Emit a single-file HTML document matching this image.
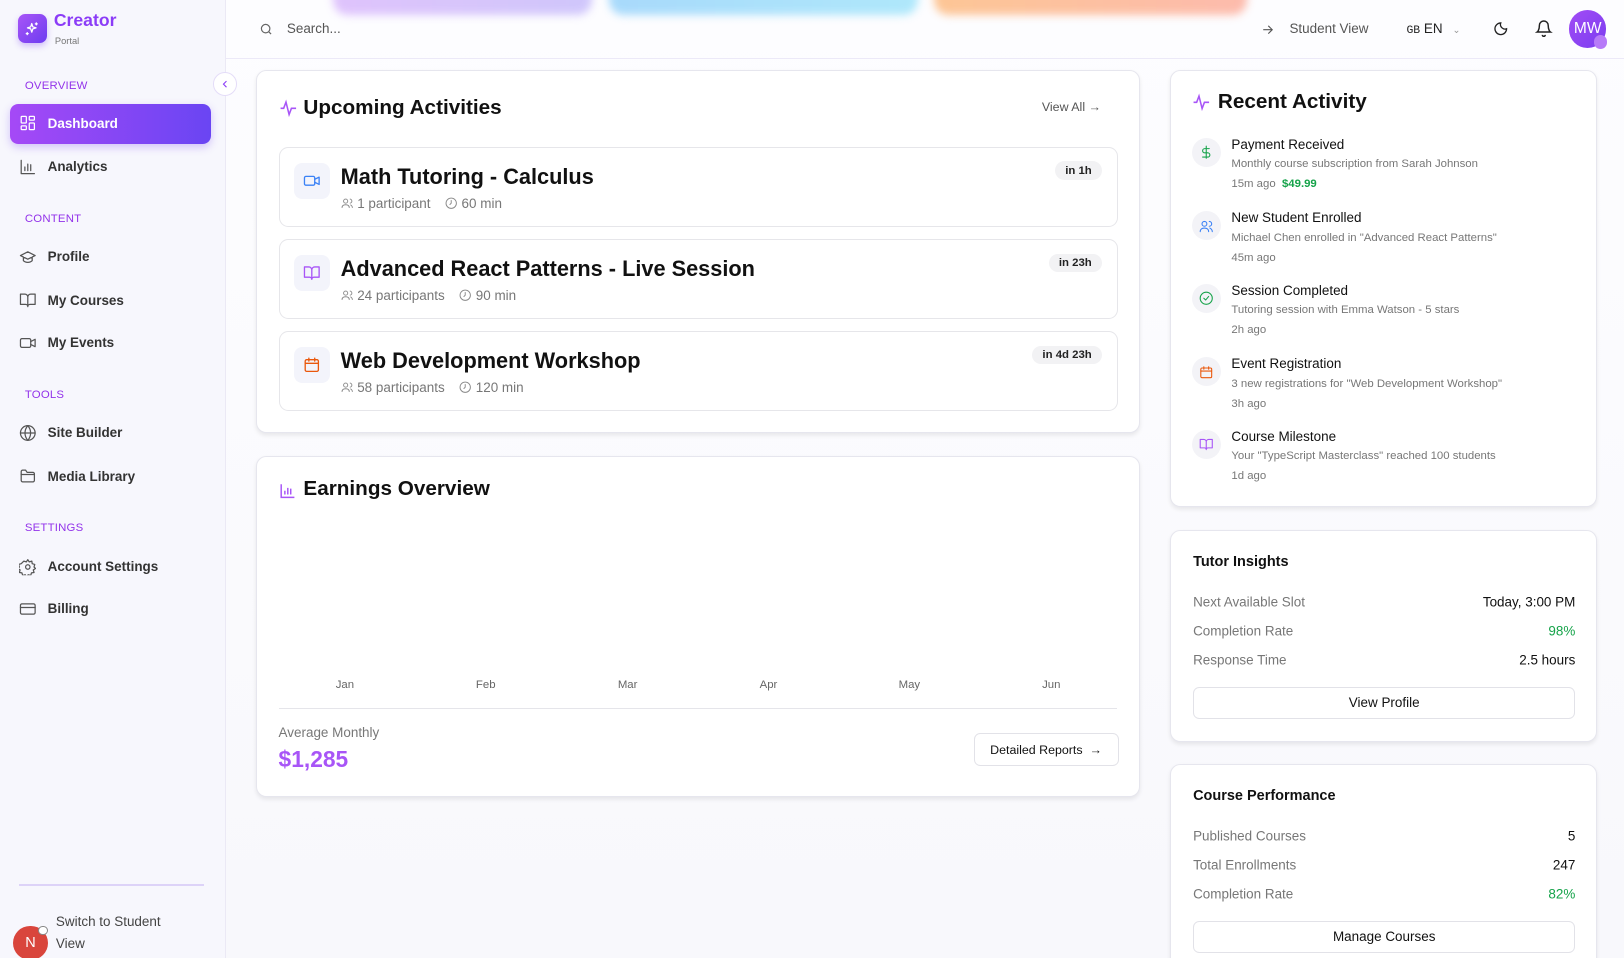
<!DOCTYPE html>
<html><head><meta charset="utf-8"><style>
*{box-sizing:border-box;margin:0;padding:0}
html,body{width:1624px;height:958px;overflow:hidden;background:#fbfbfe}
body{font-family:"Liberation Sans",Arial,sans-serif;color:#111}
#root{zoom:1.0357;position:relative;width:1568px;height:925px;background:linear-gradient(180deg,#fdfdff,#f8f8fc)}
.abs{position:absolute}
.side{left:0;top:0;width:218px;height:925px;background:#f7f7fd;border-right:1px solid #ebe9f5}
.sec{position:absolute;left:24px;font-size:11px;color:#9333ea;letter-spacing:.2px;transform:translateY(-50%)}
.nav{position:absolute;left:18px;font-size:13px;color:#333;font-weight:bold;display:flex;align-items:center;gap:11px;transform:translateY(-50%)}
.nav svg{width:17px;height:17px;fill:none;stroke:#555;stroke-width:1.7;stroke-linecap:round;stroke-linejoin:round}
.card{position:absolute;background:#fff;border:1px solid #e6e6ee;border-radius:10px;box-shadow:0 2px 4px rgba(0,0,0,.08)}
.item{position:absolute;left:21px;right:21px;height:77px;border:1px solid #e6e6ea;border-radius:9px}
.ib{position:absolute;left:14px;top:14px;width:35px;height:35px;border-radius:8px;background:#f3f4fb;display:flex;align-items:center;justify-content:center}
.ib svg{width:17px;height:17px;fill:none;stroke-width:1.8;stroke-linecap:round;stroke-linejoin:round}
.it{position:absolute;left:59px;top:15px;font-size:21px;font-weight:bold;color:#111}
.im{position:absolute;left:59px;top:46px;font-size:13px;color:#777;display:flex;gap:14px}
.im span{display:flex;align-items:center;gap:4px}
.im svg{width:12px;height:12px;fill:none;stroke:#888;stroke-width:1.8}
.badge{position:absolute;right:14px;top:13px;background:#f2f2f4;border-radius:10px;font-size:11px;font-weight:bold;padding:3px 10px;color:#222}
.ra{position:absolute;left:20px;right:20px}
.ra .ic{position:absolute;left:0;top:-6px;width:28px;height:28px;border-radius:50%;background:#f3f3f7;display:flex;align-items:center;justify-content:center}
.ra .ic svg{width:14px;height:14px;fill:none;stroke-width:1.8;stroke-linecap:round;stroke-linejoin:round}
.ra .t{position:absolute;left:38px;top:-7px;font-size:13px;color:#111;font-weight:500}
.ra .d{position:absolute;left:38px;top:14px;font-size:11px;color:#777;white-space:nowrap}
.ra .tm{position:absolute;left:38px;top:33px;font-size:11px;color:#777}
.row{position:absolute;left:21px;right:20px;font-size:13px;display:flex;justify-content:space-between;transform:translateY(-50%)}
.row .l{color:#777}.row .r{color:#111}
.btn{position:absolute;left:21px;right:20px;height:31px;border:1px solid #e2e2e8;border-radius:6px;font-size:13px;font-weight:500;display:flex;align-items:center;justify-content:center;color:#111}
.mo{position:absolute;top:656px;font-size:11px;color:#666;transform:translateX(-50%)}
.ct{position:absolute;left:45px;font-size:20px;font-weight:bold}
</style></head><body><div id="root">

<div class="abs" style="left:322px;top:-20px;width:250px;height:34px;border-radius:14px;background:linear-gradient(90deg,#dcbdfc,#cbc1fb);filter:blur(4px);opacity:.9"></div>
<div class="abs" style="left:588px;top:-20px;width:298px;height:34px;border-radius:14px;background:linear-gradient(90deg,#9fd6fb,#a7e6fb);filter:blur(4px);opacity:.9"></div>
<div class="abs" style="left:902px;top:-20px;width:302px;height:34px;border-radius:14px;background:linear-gradient(90deg,#fdc08a,#fdb4a4);filter:blur(4px);opacity:.9"></div>
<div class="abs" style="left:218px;top:56px;width:1350px;height:1px;background:#ece9f8"></div>

<div class="abs side">
 <div class="abs" style="left:17px;top:14px;width:28px;height:28px;border-radius:7px;background:linear-gradient(135deg,#a855f7,#6d3cf0);box-shadow:0 3px 6px rgba(120,60,240,.3);display:flex;align-items:center;justify-content:center">
  <svg width="15" height="15" viewBox="0 0 24 24" fill="none" stroke="#fff" stroke-width="2" stroke-linecap="round" stroke-linejoin="round"><path d="M12 4l1.6 5 5 1.6-5 1.6-1.6 5-1.6-5-5-1.6 5-1.6z"/><path d="M19 3v3M17.5 4.5h3M5 18v3M3.5 19.5h3"/></svg></div>
 <div class="abs" style="left:52px;top:10px;font-size:17px;font-weight:bold;color:#8b3cf7">Creator</div>
 <div class="abs" style="left:53px;top:35px;font-size:9px;color:#777">Portal</div>
 <div class="sec" style="top:83px">OVERVIEW</div>
 <div class="abs" style="left:10px;top:100px;width:194px;height:39px;border-radius:8px;background:linear-gradient(90deg,#a549f6,#6a45f3);box-shadow:0 3px 8px rgba(120,70,240,.3)"></div>
 <div class="nav" style="top:119px;color:#fff"><svg viewBox="0 0 24 24" style="stroke:#fff"><rect x="3" y="3" width="7" height="9" rx="1"/><rect x="14" y="3" width="7" height="5" rx="1"/><rect x="14" y="12" width="7" height="9" rx="1"/><rect x="3" y="16" width="7" height="5" rx="1"/></svg>Dashboard</div>
 <div class="nav" style="top:161px"><svg viewBox="0 0 24 24"><path d="M3 3v18h18M8 17v-5M12 17V8M16 17v-8"/></svg>Analytics</div>
 <div class="sec" style="top:211px">CONTENT</div>
 <div class="nav" style="top:248px"><svg viewBox="0 0 24 24"><path d="M22 10L12 5 2 10l10 5 10-5zM6 12v5c3 3 9 3 12 0v-5"/></svg>Profile</div>
 <div class="nav" style="top:290px"><svg viewBox="0 0 24 24"><path d="M2 4h6a4 4 0 014 4v13a3 3 0 00-3-3H2zM22 4h-6a4 4 0 00-4 4v13a3 3 0 013-3h7z"/></svg>My Courses</div>
 <div class="nav" style="top:331px"><svg viewBox="0 0 24 24"><rect x="2" y="6" width="14" height="12" rx="2"/><path d="M16 10l6-3v10l-6-3"/></svg>My Events</div>
 <div class="sec" style="top:381px">TOOLS</div>
 <div class="nav" style="top:418px"><svg viewBox="0 0 24 24"><circle cx="12" cy="12" r="10"/><path d="M2 12h20M12 2a15 15 0 010 20M12 2a15 15 0 000 20"/></svg>Site Builder</div>
 <div class="nav" style="top:460px"><svg viewBox="0 0 24 24"><path d="M3 6a2 2 0 012-2h4l2 3h8a2 2 0 012 2v9a2 2 0 01-2 2H5a2 2 0 01-2-2z"/><path d="M3 10h18"/></svg>Media Library</div>
 <div class="sec" style="top:510px">SETTINGS</div>
 <div class="nav" style="top:547px"><svg viewBox="0 0 24 24"><circle cx="12" cy="12" r="3"/><path d="M12 2l2 3 3.5-1 .5 3.5 3.5 1-1 3.5 2 2-3 2 1 3.5-3.5.5-1 3.5-3.5-1-2 3-2-3-3.5 1-1-3.5-3.5-.5 1-3.5-3-2 2-2-1-3.5 3.5-1L6.5 4 10 5z"/></svg>Account Settings</div>
 <div class="nav" style="top:588px"><svg viewBox="0 0 24 24"><rect x="2" y="5" width="20" height="14" rx="2"/><path d="M2 10h20"/></svg>Billing</div>
 <div class="abs" style="left:18px;top:854px;width:179px;height:1px;background:#ddd3f8"></div>
 <div class="abs" style="left:54px;top:880px;font-size:13px;color:#444;line-height:21px">Switch to Student<br>View</div>
 <div class="abs" style="left:13px;top:894px;width:33px;height:33px;border-radius:50%;background:#d9453c;color:#fff;font-size:14px;display:flex;align-items:center;justify-content:center">N</div>
 <div class="abs" style="left:37px;top:894px;width:9px;height:9px;border-radius:50%;background:#fff;border:1px solid #888"></div>
</div>
<div class="abs" style="left:206px;top:70px;width:23px;height:23px;border-radius:50%;background:#fff;border:1px solid #e4dcf8;display:flex;align-items:center;justify-content:center"><svg width="10" height="10" viewBox="0 0 24 24" fill="none" stroke="#8b3cf7" stroke-width="2.5"><path d="M15 5l-7 7 7 7"/></svg></div>

<svg class="abs" style="left:250px;top:21px" width="14" height="14" viewBox="0 0 24 24" fill="none" stroke="#666" stroke-width="2"><circle cx="11" cy="11" r="7"/><path d="M20 20l-4-4"/></svg>
<div class="abs" style="left:277px;top:20px;font-size:13px;color:#555">Search...</div>
<svg class="abs" style="left:1218px;top:22px" width="13" height="13" viewBox="0 0 24 24" fill="none" stroke="#555" stroke-width="2"><path d="M4 12h16M13 5l7 7-7 7"/></svg>
<div class="abs" style="left:1245px;top:20px;font-size:13px;color:#555">Student View</div>
<div class="abs" style="left:1358px;top:20px;font-size:13px;color:#222"><span style="font-size:11px;font-family:'Liberation Mono',monospace">GB</span> EN <span style="color:#999;font-size:9px;margin-left:6px">&#8964;</span></div>
<svg class="abs" style="left:1442px;top:20px" width="15" height="15" viewBox="0 0 24 24" fill="none" stroke="#222" stroke-width="2"><path d="M12 3a7 7 0 009 9 9 9 0 11-9-9z"/></svg>
<svg class="abs" style="left:1482px;top:18px" width="17" height="18" viewBox="0 0 24 24" fill="none" stroke="#222" stroke-width="2"><path d="M6 8a6 6 0 0112 0c0 7 3 9 3 9H3s3-2 3-9M10 21a2 2 0 004 0"/></svg>
<div class="abs" style="left:1515px;top:10px;width:36px;height:36px;border-radius:50%;background:linear-gradient(135deg,#a24cf5,#7b3df0);color:#fff;font-size:15px;display:flex;align-items:center;justify-content:center">MW</div>
<div class="abs" style="left:1539px;top:34px;width:13px;height:13px;border-radius:50%;background:#b77af8"></div>

<div class="card" style="left:247px;top:68px;width:854px;height:350px">
 <svg class="abs" style="left:21px;top:27px" width="18" height="18" viewBox="0 0 24 24" fill="none" stroke="#a855f7" stroke-width="2"><path d="M2 12h4l3-8 4 16 3-8h6"/></svg>
 <div class="ct" style="top:24px">Upcoming Activities</div>
 <div class="abs" style="left:758px;top:28px;font-size:12px;color:#555">View All &#8594;</div>
 <div class="item" style="top:73px"><div class="ib"><svg viewBox="0 0 24 24" stroke="#3b82f6"><rect x="2" y="6" width="14" height="12" rx="2"/><path d="M16 10l6-3v10l-6-3"/></svg></div><div class="it">Math Tutoring - Calculus</div><div class="im"><span><svg viewBox="0 0 24 24"><circle cx="9" cy="8" r="4"/><path d="M2 21c0-4 3-6 7-6s7 2 7 6M17 4a4 4 0 010 8M22 21c0-3-2-5-4-6"/></svg>1 participant</span><span><svg viewBox="0 0 24 24"><circle cx="12" cy="12" r="10"/><path d="M12 6v6l-3 3"/></svg>60 min</span></div><div class="badge">in 1h</div></div>
 <div class="item" style="top:162px"><div class="ib"><svg viewBox="0 0 24 24" stroke="#a855f7"><path d="M2 4h6a4 4 0 014 4v13a3 3 0 00-3-3H2zM22 4h-6a4 4 0 00-4 4v13a3 3 0 013-3h7z"/></svg></div><div class="it">Advanced React Patterns - Live Session</div><div class="im"><span><svg viewBox="0 0 24 24"><circle cx="9" cy="8" r="4"/><path d="M2 21c0-4 3-6 7-6s7 2 7 6M17 4a4 4 0 010 8M22 21c0-3-2-5-4-6"/></svg>24 participants</span><span><svg viewBox="0 0 24 24"><circle cx="12" cy="12" r="10"/><path d="M12 6v6l-3 3"/></svg>90 min</span></div><div class="badge">in 23h</div></div>
 <div class="item" style="top:251px"><div class="ib"><svg viewBox="0 0 24 24" stroke="#ea580c"><rect x="3" y="5" width="18" height="16" rx="2"/><path d="M3 10h18M8 3v4M16 3v4"/></svg></div><div class="it">Web Development Workshop</div><div class="im"><span><svg viewBox="0 0 24 24"><circle cx="9" cy="8" r="4"/><path d="M2 21c0-4 3-6 7-6s7 2 7 6M17 4a4 4 0 010 8M22 21c0-3-2-5-4-6"/></svg>58 participants</span><span><svg viewBox="0 0 24 24"><circle cx="12" cy="12" r="10"/><path d="M12 6v6l-3 3"/></svg>120 min</span></div><div class="badge">in 4d 23h</div></div>
</div>

<div class="card" style="left:247px;top:440px;width:854px;height:330px">
 <svg class="abs" style="left:21px;top:24px" width="17" height="17" viewBox="0 0 24 24" fill="none" stroke="#a855f7" stroke-width="2"><path d="M3 3v18h18M8 17v-5M12 17V8M16 17v-8"/></svg>
 <div class="ct" style="top:20px">Earnings Overview</div>
 <div class="abs" style="left:21px;top:243px;width:810px;height:1px;background:#e5e5ea"></div>
 <div class="abs" style="left:21px;top:259px;font-size:13px;color:#777">Average Monthly</div>
 <div class="abs" style="left:21px;top:279px;font-size:22px;font-weight:bold;color:#a855f7">$1,285</div>
 <div class="abs" style="left:692px;top:267px;width:140px;height:32px;border:1px solid #e2e2e8;border-radius:6px;font-size:12px;font-weight:500;display:flex;align-items:center;justify-content:center">Detailed Reports &nbsp;&#8594;</div>
</div>
<div class="mo" style="left:333px">Jan</div><div class="mo" style="left:469px">Feb</div><div class="mo" style="left:606px">Mar</div><div class="mo" style="left:742px">Apr</div><div class="mo" style="left:878px">May</div><div class="mo" style="left:1015px">Jun</div>

<div class="card" style="left:1130px;top:68px;width:412px;height:422px">
 <svg class="abs" style="left:20px;top:21px" width="18" height="18" viewBox="0 0 24 24" fill="none" stroke="#a855f7" stroke-width="2"><path d="M2 12h4l3-8 4 16 3-8h6"/></svg>
 <div class="ct" style="top:18px">Recent Activity</div>
 <div class="ra" style="top:70px"><div class="ic"><svg viewBox="0 0 24 24" stroke="#16a34a"><path d="M12 2v20M17 6H9.5a3.5 3.5 0 000 7h5a3.5 3.5 0 010 7H6"/></svg></div><div class="t">Payment Received</div><div class="d">Monthly course subscription from Sarah Johnson</div><div class="tm">15m ago &nbsp;<b style="color:#16a34a">$49.99</b></div></div>
 <div class="ra" style="top:141px"><div class="ic"><svg viewBox="0 0 24 24" stroke="#3b82f6"><circle cx="9" cy="8" r="4"/><path d="M2 21c0-4 3-6 7-6s7 2 7 6M17 4a4 4 0 010 8M22 21c0-3-2-5-4-6"/></svg></div><div class="t">New Student Enrolled</div><div class="d">Michael Chen enrolled in "Advanced React Patterns"</div><div class="tm">45m ago</div></div>
 <div class="ra" style="top:211px"><div class="ic"><svg viewBox="0 0 24 24" stroke="#16a34a"><circle cx="12" cy="12" r="10"/><path d="M8 12l3 3 5-6"/></svg></div><div class="t">Session Completed</div><div class="d">Tutoring session with Emma Watson - 5 stars</div><div class="tm">2h ago</div></div>
 <div class="ra" style="top:282px"><div class="ic"><svg viewBox="0 0 24 24" stroke="#ea580c"><rect x="3" y="5" width="18" height="16" rx="2"/><path d="M3 10h18M8 3v4M16 3v4"/></svg></div><div class="t">Event Registration</div><div class="d">3 new registrations for "Web Development Workshop"</div><div class="tm">3h ago</div></div>
 <div class="ra" style="top:352px"><div class="ic"><svg viewBox="0 0 24 24" stroke="#a855f7"><path d="M2 4h6a4 4 0 014 4v13a3 3 0 00-3-3H2zM22 4h-6a4 4 0 00-4 4v13a3 3 0 013-3h7z"/></svg></div><div class="t">Course Milestone</div><div class="d">Your "TypeScript Masterclass" reached 100 students</div><div class="tm">1d ago</div></div>
</div>

<div class="card" style="left:1130px;top:512px;width:412px;height:204px">
 <div class="abs" style="left:21px;top:22px;font-size:14px;font-weight:bold">Tutor Insights</div>
 <div class="row" style="top:68px"><span class="l">Next Available Slot</span><span class="r">Today, 3:00 PM</span></div>
 <div class="row" style="top:96px"><span class="l">Completion Rate</span><span class="r" style="color:#16a34a">98%</span></div>
 <div class="row" style="top:124px"><span class="l">Response Time</span><span class="r">2.5 hours</span></div>
 <div class="btn" style="top:150px">View Profile</div>
</div>

<div class="card" style="left:1130px;top:738px;width:412px;height:220px">
 <div class="abs" style="left:21px;top:22px;font-size:14px;font-weight:bold">Course Performance</div>
 <div class="row" style="top:68px"><span class="l">Published Courses</span><span class="r">5</span></div>
 <div class="row" style="top:96px"><span class="l">Total Enrollments</span><span class="r">247</span></div>
 <div class="row" style="top:124px"><span class="l">Completion Rate</span><span class="r" style="color:#16a34a">82%</span></div>
 <div class="btn" style="top:150px">Manage Courses</div>
</div>

</div></body></html>
